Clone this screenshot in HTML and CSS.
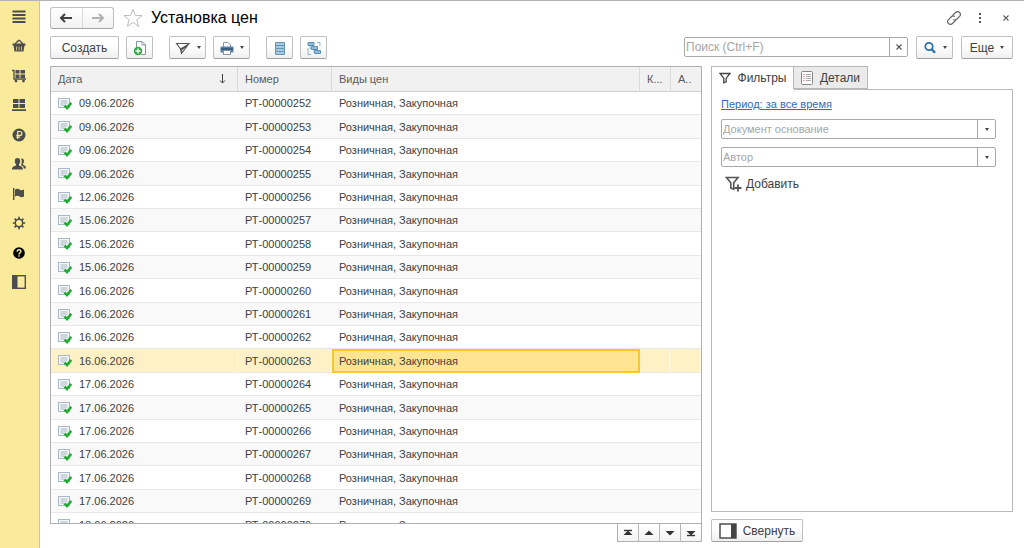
FILE: index.html
```html
<!DOCTYPE html>
<html lang="ru">
<head>
    <meta charset="utf-8">
    <title>Установка цен</title>
    <link rel="stylesheet" href="styles.css">
</head>
<body>
    <svg class="sprite">
        <symbol id="doc" viewBox="0 0 14 13">
            <rect x="0.5" y="1.5" width="11" height="9" fill="#f4f7fa" stroke="#a9b7c6"/>
            <path d="M2.500 4h7M2.500 6h7M2.500 8h4" stroke="#aab4be" fill="none"/>
            <path d="M6.500 8.500l2.500 2.500 4.200-5.200" stroke="#1fae33" stroke-width="2.600" fill="none"/>
        </symbol>
    </svg>

    <nav class="sidebar">
        <button aria-label="Меню"><svg width="14" height="14" viewBox="0 0 14 14"><path d="M0.500 1.500h13M0.500 5h13M0.500 8.500h13M0.500 12h13" stroke="#4d4d4d" stroke-width="1.800"/></svg></button>
        <button aria-label="Продажи"><svg width="14" height="14" viewBox="0 0 14 14"><path d="M3 5l3.500-3.500h1L11 5" stroke="#4d4d4d" stroke-width="1.400" fill="none"/><path d="M0.500 4.500h13v2h-1l-1 6h-9l-1-6h-1z" fill="#4d4d4d"/><path d="M4.500 7.500v4M7 7.500v4M9.500 7.500v4" stroke="#faeb9c" stroke-width="0.700"/></svg></button>
        <button aria-label="Закупки"><svg width="14" height="14" viewBox="0 0 14 14"><path d="M0 1.500h2v8.500h12" stroke="#4d4d4d" stroke-width="1.300" fill="none"/><path d="M3.500 1h4v3.500h-4zM8.500 1h4.500v3.500H8.500zM3.500 5.500h4V9h-4zM8.500 5.500h4.500V9H8.500z" fill="#4d4d4d"/><circle cx="4" cy="12" r="1.400" fill="#4d4d4d"/><circle cx="11.500" cy="12" r="1.400" fill="#4d4d4d"/></svg></button>
        <button aria-label="Склад"><svg width="14" height="14" viewBox="0 0 14 14"><path d="M1 1h5.500v4H1zM7.500 1H13v4H7.500zM1 6h5.500v4H1zM7.500 6H13v4H7.500zM0 11.200h14V13H0z" fill="#4d4d4d"/></svg></button>
        <button aria-label="Деньги"><svg width="14" height="14" viewBox="0 0 14 14"><circle cx="7" cy="7" r="6.500" fill="#4d4d4d"/><path d="M5.700 11V3.500h2.200a1.900 1.900 0 0 1 0 3.900H4.300M4.300 9.200h3.900" stroke="#faeb9c" stroke-width="1.200" fill="none"/></svg></button>
        <button aria-label="Персонал"><svg width="14" height="14" viewBox="0 0 14 14"><path d="M5.500 1c1.800 0 2.700 1.300 2.700 3S7.500 6.700 7 7.200v1.300c2 .8 4 1 4 4H0c0-3 2-3.200 4-4V7.200C3.400 6.700 2.800 5.700 2.800 4s.9-3 2.700-3z" fill="#4d4d4d"/><path d="M9 1.500c1.700-.5 3 .7 3 2.500 0 1.500-.5 2.300-1 2.800v1c1.500.7 3 1 3 3.700h-2c-.3-2-1.500-2.700-3-3.300 1-2 1.200-4.700 0-6.700z" fill="#4d4d4d"/></svg></button>
        <button aria-label="Компания"><svg width="14" height="14" viewBox="0 0 14 14"><path d="M1.700 1v12" stroke="#4d4d4d" stroke-width="1.400"/><path d="M3 2.500c2-1.200 3.500-1 4.500 0s3 1 4.500 0v7c-1.500 1-3.500 1-4.500 0s-2.500-1.200-4.500 0z" fill="#4d4d4d"/></svg></button>
        <button aria-label="Настройки"><svg width="14" height="14" viewBox="0 0 14 14"><circle cx="7" cy="7" r="3.700" stroke="#4d4d4d" stroke-width="1.500" fill="none"/><path d="M7 .8v2.400M7 10.800v2.400M.8 7h2.400M10.800 7h2.400M2.600 2.600l1.700 1.700M9.700 9.700l1.700 1.700M2.600 11.400l1.700-1.700M9.700 4.300l1.700-1.700" stroke="#4d4d4d" stroke-width="1.700"/></svg></button>
        <button aria-label="Справка"><svg width="14" height="14" viewBox="0 0 14 14"><circle cx="7" cy="7" r="5.800" fill="#000"/><path d="M5.200 5.700c0-2.600 3.700-2.400 3.700-.3C8.900 6.900 7 6.800 7 8.400M7 9.300v1.500" stroke="#faeb9c" stroke-width="1.400" fill="none"/></svg></button>
        <button aria-label="Панель"><svg width="14" height="14" viewBox="0 0 14 14"><rect x="0.700" y="0.700" width="12.600" height="12.600" fill="none" stroke="#4d4d4d" stroke-width="1.400"/><path d="M1 1h4.500v12H1z" fill="#4d4d4d"/></svg></button>
    </nav>

    <main class="page">
        <header class="titlebar">
            <div class="history">
                <button aria-label="Назад"><svg width="14" height="10" viewBox="0 0 14 10"><path d="M2 5h11" stroke="#404040" stroke-width="2"/><path d="M6 1L2 5l4 4" stroke="#404040" stroke-width="2" fill="none"/></svg></button>
                <button aria-label="Вперед"><svg width="14" height="10" viewBox="0 0 14 10"><path d="M1 5h11" stroke="#b0b0b0" stroke-width="2"/><path d="M8 1l4 4-4 4" stroke="#b0b0b0" stroke-width="2" fill="none"/></svg></button>
            </div>
            <button class="plain star" aria-label="В избранное"><svg width="20" height="20" viewBox="0 0 20 20"><path d="M10 1.200l2.300 6.200 6.900.2-5.400 4.100 1.900 6.600-5.700-3.900-5.700 3.900 1.900-6.600L.8 7.600l6.900-.2z" fill="#fff" stroke="#b9bec4"/></svg></button>
            <h1>Установка цен</h1>
            <div class="window-tools">
                <button class="plain" aria-label="Ссылка"><svg width="14" height="14" viewBox="0 0 14 14"><g transform="rotate(-45 7 7)" fill="none" stroke="#666" stroke-width="1.200"><path d="M6.500 9.800H2a2.800 2.800 0 0 1 0-5.600H6a2.500 2.500 0 0 1 2.500 2.300"/><path d="M7.500 4.200H12a2.800 2.800 0 0 1 0 5.600H8a2.500 2.500 0 0 1-2.500-2.300"/></g></svg></button>
                <button class="plain" aria-label="Дополнительно"><svg width="14" height="14" viewBox="0 0 14 14"><path d="M6 2h2v2H6zM6 6h2v2H6zM6 10h2v2H6z" fill="#555"/></svg></button>
                <button class="plain" aria-label="Закрыть"><svg width="14" height="14" viewBox="0 0 14 14"><path d="M4.500 4.500l5 5M9.500 4.500l-5 5" stroke="#666" stroke-width="1.200"/></svg></button>
            </div>
        </header>

        <div class="toolbar">
            <button class="btn create">Создать</button>
            <button class="btn icon" aria-label="Скопировать"><svg width="14" height="16" viewBox="0 0 14 16"><path d="M3.500 8V1.500h5.500l3.500 3.500v9.500H8" fill="#fff" stroke="#8595a6"/><path d="M9 1.500V5h3.500" fill="none" stroke="#8595a6"/><circle cx="5" cy="11" r="4.200" fill="#35a845"/><path d="M5 8.500v5M2.500 11h5" stroke="#fff" stroke-width="1.400"/></svg></button>
            <button class="btn drop send" aria-label="Отправить"><svg width="16" height="14" viewBox="0 0 16 14"><path d="M1.500 2.500h12.500L6.500 12.500 5.500 8zM5.500 8L11 4.800M6.500 12.500V9L14 2.500" fill="none" stroke="#555" stroke-width="1.100"/></svg><i class="caret"></i></button>
            <button class="btn drop" aria-label="Печать"><svg width="14" height="14" viewBox="0 0 14 14"><path d="M3.500 6V1.500h4.500l2.500 2.500v2" fill="#fff" stroke="#8595a6"/><rect x="0.500" y="5.500" width="13" height="6" rx="1" fill="#5b7fa6"/><path d="M1 8h12" stroke="#33567c" stroke-width="1.600"/><rect x="3.500" y="9.500" width="7" height="4" fill="#fff" stroke="#8595a6"/></svg><i class="caret"></i></button>
            <button class="btn icon list" aria-label="Список"><svg width="12" height="14" viewBox="0 0 12 14"><path d="M1.500 1.500h9v3h-9zM1.500 4.500h9v3h-9zM1.500 7.500h9v3h-9zM1.500 10.500h9v3h-9z" fill="#a4c9e3" stroke="#6a94b4"/></svg></button>
            <button class="btn icon" aria-label="Структура"><svg width="14" height="14" viewBox="0 0 14 14"><path d="M1 7v6.500h3M10 1.500h3V5M3 5v2.500h2M7 8v3.500h2" fill="none" stroke="#8fb3cd"/><path d="M1 1.500h6v3H1zM4.500 5.500h6v3h-6zM7.500 9.500h6v3h-6z" fill="#8fbddd" stroke="#5f8fb3"/></svg></button>
            <div class="search">
                <input type="text" placeholder="Поиск (Ctrl+F)" aria-label="Поиск">
                <button aria-label="Очистить"><svg width="8" height="8" viewBox="0 0 8 8"><path d="M1.500 1.500l5 5M6.500 1.500l-5 5" stroke="#555" stroke-width="1.100"/></svg></button>
            </div>
            <button class="btn drop find" aria-label="Найти"><svg width="14" height="14" viewBox="0 0 14 14"><circle cx="6" cy="5.500" r="3.700" fill="none" stroke="#2b73a8" stroke-width="1.800"/><path d="M8.700 8.300L12 11.800" stroke="#2b73a8" stroke-width="2.400"/></svg><i class="caret"></i></button>
            <button class="btn drop more">Еще<i class="caret"></i></button>
        </div>

        <div class="content">
            <section class="list-side">
                <div class="grid">
                    <table>
                        <colgroup><col class="c-date"><col class="c-num"><col><col class="c-small"><col class="c-last"></colgroup>
                        <thead>
                            <tr>
                                <th><div class="sorted">Дата<svg width="7" height="10" viewBox="0 0 7 10"><path d="M3.500 0v9M1 6.500L3.500 9 6 6.500" fill="none" stroke="#404040"/></svg></div></th>
                                <th>Номер</th>
                                <th>Виды цен</th>
                                <th>К...</th>
                                <th>А..</th>
                            </tr>
                        </thead>
                        <tbody id="rows"></tbody>
                    </table>
                </div>
                <div class="pager">
                    <button aria-label="В начало"><svg width="10" height="8" viewBox="0 0 10 8"><path d="M1 1.500h8" stroke="#333" stroke-width="1.400"/><path d="M5 1.500l4.500 4.500h-9z" fill="#333"/></svg></button>
                    <button aria-label="Вверх"><svg width="10" height="8" viewBox="0 0 10 8"><path d="M5 1.500l4.500 4.500h-9z" fill="#333"/></svg></button>
                    <button aria-label="Вниз"><svg width="10" height="8" viewBox="0 0 10 8"><path d="M5 6.500L0.500 2h9z" fill="#333"/></svg></button>
                    <button aria-label="В конец"><svg width="10" height="8" viewBox="0 0 10 8"><path d="M5 6.500L0.500 2h9z" fill="#333"/><path d="M1 6.500h8" stroke="#333" stroke-width="1.400"/></svg></button>
                </div>
            </section>

            <aside class="filters">
                <div class="tabs">
                    <button class="tab active"><svg width="12" height="12" viewBox="0 0 12 12"><path d="M1 1.500h10L7.200 6.200v3.600l-2.400 1V6.200z" fill="none" stroke="#444" stroke-width="1.300"/></svg>Фильтры</button>
                    <button class="tab"><svg width="12" height="14" viewBox="0 0 12 14"><rect x="0.500" y="0.500" width="11" height="13" rx="1" fill="#fff" stroke="#888"/><path d="M2.500 3.500h1M2.500 5.500h1M2.500 7.500h1M2.500 9.500h1" stroke="#d05050"/><path d="M5 3.500h5M5 5.500h5M5 7.500h5M5 9.500h5" stroke="#aaa"/></svg>Детали</button>
                </div>
                <div class="panel">
                    <a href="#">Период: за все время</a>
                    <div class="combo">
                        <input type="text" placeholder="Документ основание" aria-label="Документ основание">
                        <button aria-label="Выбрать документ"><i class="caret"></i></button>
                    </div>
                    <div class="combo">
                        <input type="text" placeholder="Автор" aria-label="Автор">
                        <button aria-label="Выбрать автора"><i class="caret"></i></button>
                    </div>
                    <button class="plain add"><svg width="17" height="16" viewBox="0 0 17 16"><path d="M1.500 1.500h11.500L8.700 6.700v6.500L5.800 12V6.700z" fill="none" stroke="#555" stroke-width="1.600"/><path d="M13 8.500v7M9.500 12h7" stroke="#555" stroke-width="1.800"/></svg>Добавить</button>
                </div>
                <button class="btn collapse"><svg width="18" height="16" viewBox="0 0 18 16"><rect x="1" y="1" width="16" height="14" fill="#fff" stroke="#444" stroke-width="1.400"/><path d="M12 1h5v14h-5z" fill="#444"/></svg>Свернуть</button>
            </aside>
        </div>
    </main>

<script>
var dates = ["09.06", "09.06", "09.06", "09.06", "12.06", "15.06", "15.06", "15.06", "16.06", "16.06",
    "16.06", "16.06", "17.06", "17.06", "17.06", "17.06", "17.06", "17.06", "18.06"];
var selected = 11;
var html = "";
dates.forEach(function(d, i){
    html += '<tr' + (i == selected ? ' class="selected"' : '') + '>'
        + '<td><div class="date"><svg width="14" height="13"><use href="#doc"/></svg>' + d + '.2026</div></td>'
        + '<td>РТ-00000' + (252 + i) + '</td>'
        + '<td>Розничная, Закупочная</td><td></td><td></td></tr>';
});
document.getElementById("rows").innerHTML = html;
</script>
</body>
</html>
```
FILE: styles.css
```css
*{
    box-sizing: border-box;
    margin: 0;
    padding: 0;
}
body{
    display: flex;
    height: 100vh;
    overflow: hidden;
    border-top: 1px solid #b4b4b4;
    background: #fff;
    color: #404040;
    font: 11px "Liberation Sans", Arial, sans-serif;
}
button, input{
    font: inherit;
    color: inherit;
}
button{
    display: flex;
    align-items: center;
    justify-content: center;
    border: 0;
    background: none;
}
svg{
    display: block;
    flex: none;
}
.sprite{
    display: none;
}

/* sections */
.sidebar{
    flex: none;
    width: 40px;
    padding-top: 1px;
    background: #faeb9c;
    border-right: 1px solid #d3c88c;
}
.sidebar button{
    width: 37px;
    height: 29px;
}
.sidebar button:nth-child(even){
    height: 30px;
}

.page{
    flex: 1;
    min-width: 0;
    display: flex;
    flex-direction: column;
    padding: 6px 11px 6px 10px;
}
.titlebar{
    display: flex;
    align-items: center;
    height: 22px;
}
.history{
    display: flex;
    width: 64px;
    height: 22px;
    border: 1px solid #c0c0c0;
    border-bottom-color: #a5a5a5;
    border-radius: 3px;
    background: linear-gradient(#fff, #f1f1f1);
}
.history button{
    flex: 1;
}
.history button + button{
    border-left: 1px solid #d8d8d8;
}
.star{
    margin: 0 8px 0 9px;
}
h1{
    font-size: 16px;
    font-weight: normal;
    color: #000;
}
.window-tools{
    display: flex;
    gap: 12px;
    margin-left: auto;
}

.toolbar{
    display: flex;
    margin-top: 7px;
    height: 23px;
}
.btn{
    flex: none;
    height: 23px;
    border: 1px solid #c0c0c0;
    border-bottom-color: #a0a0a0;
    border-radius: 2px;
    background: linear-gradient(#fff 40%, #efefef);
    font-size: 12px;
}
.create{
    width: 69px;
}
.icon{
    width: 27px;
    margin-left: 7px;
}
.drop{
    width: 37px;
    margin-left: 7px;
    gap: 6px;
}
.send, .list{
    margin-left: 16px;
}
.find{
    margin-left: 8px;
}
.more{
    width: 52px;
    margin-left: 8px;
}
.caret{
    border: 2px solid transparent;
    border-top: 3px solid #444;
    border-bottom: 0;
}
.search, .combo{
    display: flex;
    height: 20px;
    border: 1px solid #a9a9a9;
    border-radius: 2px;
}
.search{
    width: 224px;
    margin: 1px 0 0 auto;
}
.search input, .combo input{
    flex: 1;
    min-width: 0;
    padding-left: 1px;
    border: 0;
    background: none;
    outline: 0;
}
.search input{
    font-size: 12px;
}
input::placeholder{
    color: #a6a6a6;
}
.search button, .combo button{
    width: 18px;
    border-left: 1px solid #a9a9a9;
}

.content{
    flex: 1;
    min-height: 0;
    display: flex;
    gap: 9px;
    margin-top: 7px;
}
.list-side{
    flex: 1;
    min-width: 0;
    display: flex;
    flex-direction: column;
}
.grid{
    flex: 1;
    min-height: 0;
    overflow: hidden;
    border: 1px solid #b0b0b0;
}
table{
    width: 100%;
    table-layout: fixed;
    border-collapse: separate;
    border-spacing: 0;
}
.c-date{
    width: 187px;
}
.c-num{
    width: 94px;
}
.c-small{
    width: 31px;
}
.c-last{
    width: 30px;
}
th{
    height: 25px;
    padding: 0 7px;
    background: #f1f1f1;
    border-right: 1px solid #dadada;
    border-bottom: 1px solid #d0d0d0;
    font-weight: normal;
    text-align: left;
    color: #5a5a5a;
    white-space: nowrap;
}
th:last-child{
    border-right: 0;
}
.sorted{
    display: flex;
    align-items: center;
    justify-content: space-between;
    padding-right: 4px;
}
td{
    height: 23px;
    padding: 0 7px;
    border-bottom: 1px solid #e8e8e8;
    white-space: nowrap;
}
tr:nth-child(5n+2) td, tr:nth-child(5n+4) td{
    height: 24px;
}
tbody tr:nth-child(even){
    background: #f9f9f9;
}
.date{
    display: flex;
    align-items: center;
    gap: 7px;
}
tbody tr.selected{
    background: #fff1c6;
}
.selected td{
    border-right: 1px solid #fff9e6;
}
.selected td:nth-child(3){
    background: #ffe491;
    border: 0;
    box-shadow: inset 0 0 0 2px #fbc62b;
}
.pager{
    display: flex;
    align-self: flex-end;
    height: 18px;
    border: 1px solid #b0b0b0;
    border-top: 0;
}
.pager button{
    width: 20px;
    background: linear-gradient(#fff, #f3f3f3);
}
.pager button + button{
    width: 21px;
    border-left: 1px solid #b8b8b8;
}

/* filters */
.filters{
    flex: none;
    width: 302px;
    display: flex;
    flex-direction: column;
}
.tabs{
    display: flex;
    height: 23px;
}
.tab{
    width: 74px;
    gap: 7px;
    border: 1px solid #b8b8b8;
    border-left: 0;
    background: #ebebeb;
    font-size: 12px;
}
.tab.active{
    width: 83px;
    border-left: 1px solid #b8b8b8;
    border-bottom: 0;
    background: #fff;
}
.panel{
    flex: 1;
    display: flex;
    flex-direction: column;
    align-items: flex-start;
    padding: 8px 16px 8px 9px;
    border: 1px solid #b8b8b8;
    border-top: 0;
    background: linear-gradient(#b8b8b8, #b8b8b8) 82px 0 / 100% 1px no-repeat;
}
.panel a{
    margin-bottom: 8px;
    color: #2f6bc0;
    font-size: 11px;
    line-height: 14px;
}
.combo{
    align-self: stretch;
    margin-bottom: 8px;
}
.add{
    margin: 1px 0 0 4px;
    gap: 4px;
    font-size: 12px;
}
.collapse{
    align-self: flex-start;
    width: 92px;
    margin-top: 7px;
    gap: 6px;
}
```
